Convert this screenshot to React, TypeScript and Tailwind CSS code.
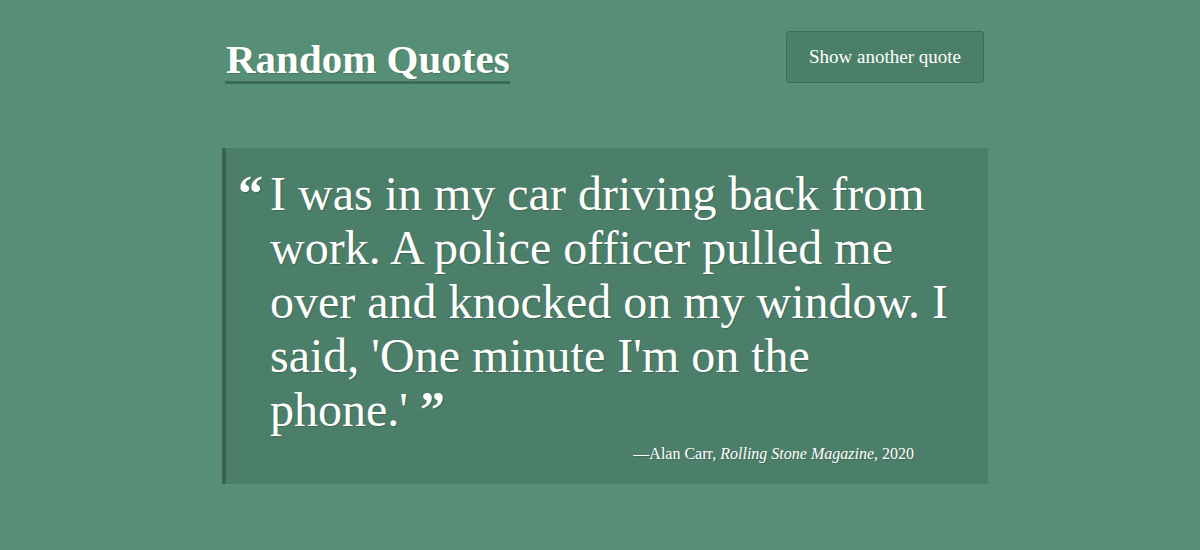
import React from "react";

export default function App() {
  const serif = { fontFamily: '"Liberation Serif", "Times New Roman", serif' };
  return (
    <div
      className="w-[1200px] h-[550px] bg-[#568f76] text-white overflow-hidden [text-shadow:1px_1px_1px_rgba(0,0,0,0.18)]"
      style={serif}
    >
      <div className="ml-[222px] w-[766px] pt-[31px]">
        <header className="flex justify-between items-start pl-[3px] pr-[4px]">
          <h1 className="mt-[6px] text-[41px] leading-[44px] font-bold border-b-[3px] border-[#3d6a55] pl-[1px]">
            Random Quotes
          </h1>
          <button className="w-[198px] h-[52px] bg-[#4b7f68] border border-[#3e6b56] rounded-[3px] text-[19px] text-white">
            Show another quote
          </button>
        </header>

        <section className="mt-[64px] bg-[#4c7f69] border-l-4 border-[#3b6350] pt-[18px] pb-[20px]">
          <div className="flex items-baseline">
            <span className="w-[44px] pl-[12px] text-[50px] leading-[54px] font-bold shrink-0">
              “
            </span>
            <p className="text-[48px] leading-[54px] whitespace-nowrap">
              I was in my car driving back from
              <br />
              work. A police officer pulled me
              <br />
              over and knocked on my window. I
              <br />
              said, 'One minute I'm on the
              <br />
              phone.' <span className="text-[50px] leading-none font-bold">”</span>
            </p>
          </div>
          <p className="mt-[7px] pr-[74px] text-right text-[16px] leading-[20px]">
            —Alan Carr, <cite className="italic">Rolling Stone Magazine</cite>, 2020
          </p>
        </section>
      </div>
    </div>
  );
}
